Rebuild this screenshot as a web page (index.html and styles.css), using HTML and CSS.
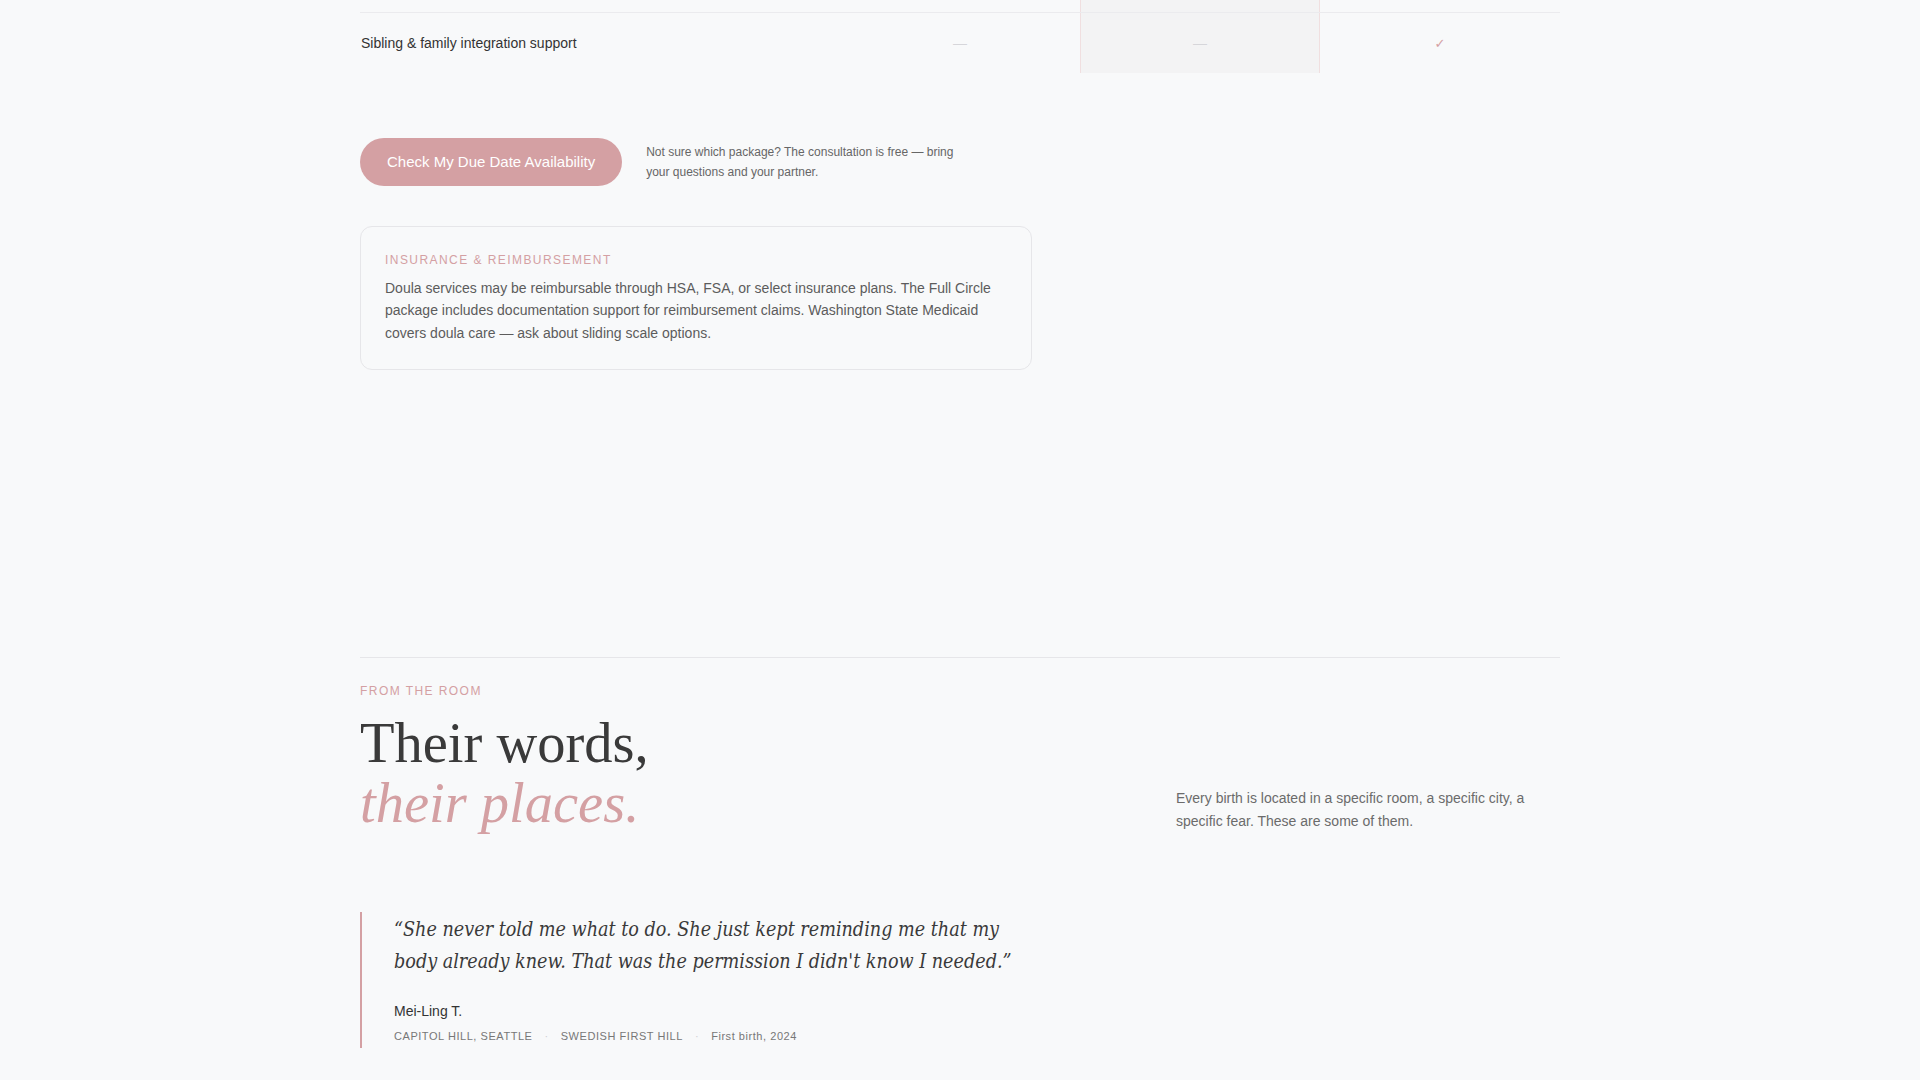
FILE: index.html
```html
<!DOCTYPE html>
<html lang="en">
<head>
  <meta charset="UTF-8">
  <meta name="viewport" content="width=device-width, initial-scale=1.0">
  <title>Packages &amp; Stories</title>
  <link rel="stylesheet" href="styles.css">
</head>
<body>
  <section class="packages">
    <div class="compare">
      <div class="row tail">
        <div class="cell label"></div>
        <div class="cell"></div>
        <div class="cell featured"></div>
        <div class="cell"></div>
      </div>
      <div class="row">
        <div class="cell label">Sibling &amp; family integration support</div>
        <div class="cell"><span class="dash">—</span></div>
        <div class="cell featured"><span class="dash">—</span></div>
        <div class="cell"><span class="check">✓</span></div>
      </div>
    </div>

    <div class="cta">
      <a class="btn" href="#">Check My Due Date Availability</a>
      <p class="cta-note">Not sure which package? The consultation is free — bring your questions and your partner.</p>
    </div>

    <div class="note-card">
      <div class="eyebrow">Insurance &amp; Reimbursement</div>
      <p>Doula services may be reimbursable through HSA, FSA, or select insurance plans. The Full Circle package includes documentation support for reimbursement claims. Washington State Medicaid covers doula care — ask about sliding scale options.</p>
    </div>
  </section>

  <section class="stories">
    <div class="eyebrow">From the Room</div>
    <div class="stories-head">
      <h2>Their words,<br><em>their places.</em></h2>
      <p>Every birth is located in a specific room, a specific city, a specific fear. These are some of them.</p>
    </div>

    <blockquote class="story">
      <p class="quote">“She never told me what to do. She just kept reminding me that my body already knew. That was the permission I didn't know I needed.”</p>
      <div class="who">Mei-Ling T.</div>
      <div class="meta">
        <span class="caps">Capitol Hill, Seattle</span>
        <span class="sep">·</span>
        <span class="caps">Swedish First Hill</span>
        <span class="sep">·</span>
        <span>First birth, 2024</span>
      </div>
    </blockquote>
  </section>
</body>
</html>
```

FILE: styles.css
```css
* {
  box-sizing: border-box;
}
body {
  margin: 0;
  padding: 0 0 120px;
  background: #f8f9fa;
  font-family: "Liberation Sans", Arial, sans-serif;
  color: #3a3a3a;
}
section {
  width: 1200px;
  margin: 0 auto;
}
.eyebrow {
  font-size: 12px;
  line-height: 18px;
  letter-spacing: 0.12em;
  text-transform: uppercase;
  color: #d4a0a3;
}

/* comparison table (tail end) */
.row {
  display: grid;
  grid-template-columns: 2fr 1fr 1fr 1fr;
  border-top: 1px solid #ebebee;
}
.row.tail {
  border-top: none;
  height: 12px;
}
.cell {
  display: flex;
  align-items: center;
  justify-content: center;
  height: 60px;
  font-size: 14px;
}
.tail .cell {
  height: 12px;
}
.cell.label {
  justify-content: flex-start;
  padding-left: 1px;
  color: #333;
}
.cell.featured {
  background: #f3f3f4;
  border-left: 1px solid #f0dfe0;
  border-right: 1px solid #f0dfe0;
}
.dash {
  color: #d6d6da;
}
.check {
  color: #d4a0a3;
  font-family: "DejaVu Sans", sans-serif;
  font-size: 13px;
}

/* call to action */
.cta {
  display: flex;
  align-items: center;
  gap: 24px;
  margin-top: 65px;
}
.btn {
  display: inline-block;
  padding: 0 27px;
  height: 48px;
  line-height: 48px;
  border-radius: 24px;
  background: #d4a0a3;
  color: #fff;
  font-size: 15px;
  text-decoration: none;
}
.cta-note {
  margin: 0;
  max-width: 320px;
  font-size: 12px;
  line-height: 20px;
  color: #666;
}

.note-card {
  margin-top: 40px;
  max-width: 672px;
  padding: 24px 24px 25px;
  border: 1px solid #e6e6e9;
  border-radius: 12px;
}
.note-card p {
  margin: 8px 0 0;
  font-size: 14px;
  line-height: 1.6;
  color: #5c5c5c;
}

/* testimonials */
.stories {
  margin-top: 287px;
  padding-top: 24px;
  border-top: 1px solid #e6e6e9;
}
.stories-head {
  display: flex;
  justify-content: space-between;
  align-items: flex-end;
  margin-top: 13px;
}
.stories-head h2 {
  margin: 0;
  font-family: "Liberation Serif", "Times New Roman", serif;
  font-weight: 400;
  font-size: 56.5px;
  line-height: 60px;
  color: #3a3a3a;
}
.stories-head h2 em {
  color: #d4a0a3;
}
.stories-head p {
  margin: 0;
  max-width: 384px;
  font-size: 14px;
  line-height: 23px;
  color: #6b6b6b;
}

.story {
  margin: 79px 0 0;
  padding: 2px 0 4px 32px;
  border-left: 2px solid #d4a0a3;
}
.quote {
  margin: 0;
  max-width: 632px;
  font-family: "DejaVu Serif Condensed", "DejaVu Serif", serif;
  font-stretch: condensed;
  font-style: italic;
  font-size: 19.6px;
  line-height: 32px;
  color: #3a3a3a;
}
.who {
  margin-top: 23px;
  font-size: 14px;
  line-height: 20px;
  color: #333;
}
.meta {
  margin-top: 7px;
  display: flex;
  align-items: center;
  font-size: 11px;
  line-height: 16px;
  letter-spacing: 0.05em;
  color: #777;
}
.meta .caps {
  text-transform: uppercase;
}
.meta .sep {
  margin: 0 12px;
  color: #cfcfd3;
}
```
